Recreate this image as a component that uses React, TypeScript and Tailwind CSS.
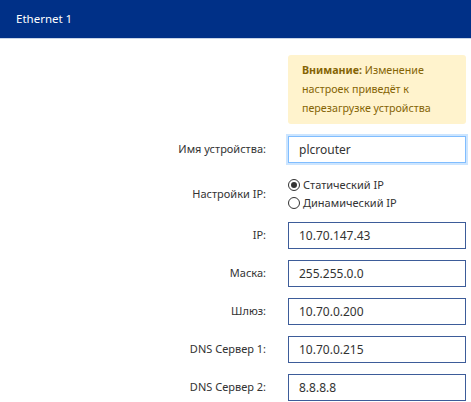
import { useState } from 'react';

const fields = [
  { label: 'IP:', value: '10.70.147.43' },
  { label: 'Маска:', value: '255.255.0.0' },
  { label: 'Шлюз:', value: '10.70.0.200' },
  { label: 'DNS Сервер 1:', value: '10.70.0.215' },
  { label: 'DNS Сервер 2:', value: '8.8.8.8' },
];

function Radio({ checked, label, onClick }: { checked: boolean; label: string; onClick: () => void }) {
  return (
    <button type="button" onClick={onClick} className="flex items-center gap-[3px] h-[18px] text-[11px] text-[#333]">
      <span className="w-[12px] h-[12px] rounded-full border border-[#333] flex items-center justify-center">
        {checked && <span className="w-[6px] h-[6px] rounded-full bg-[#333]" />}
      </span>
      {label}
    </button>
  );
}

export default function App() {
  const [mode, setMode] = useState<'static' | 'dhcp'>('static');
  const [name, setName] = useState('plcrouter');
  const [values, setValues] = useState(fields.map(f => f.value));

  return (
    <div className="w-[471px] h-[402px] bg-white overflow-hidden" style={{ fontFamily: '"Noto Sans", "Open Sans", sans-serif' }}>
      {/* Header */}
      <div className="h-[39px] bg-[#003087] border-b border-[#c8d4e8] flex items-center px-[16px]">
        <span className="text-white text-[11.5px]">Ethernet 1</span>
      </div>

      <div className="grid grid-cols-[1fr_178px] gap-x-[22px] pr-[5px] pt-[16px]">
        <div />
        <div className="bg-[#fff3cd] rounded-[3px] pl-[14px] pr-[10px] py-[6px] text-[10.7px] leading-[19px] text-[#856404]">
          <span className="font-bold">Внимание:</span> Изменение настроек приведёт к перезагрузке устройства
        </div>

        <div className="flex items-center justify-end mt-[12px] text-[11px] text-[#333]">Имя устройства:</div>
        <input
          value={name}
          onChange={e => setName(e.target.value)}
          className="mt-[12px] h-[27px] px-[10px] text-[12px] text-[#333] border border-[#80bdff] shadow-[0_0_0_2px_rgba(0,123,255,0.2)] outline-none"
        />

        <div className="flex items-center justify-end mt-[13px] text-[11px] text-[#333]">Настройки IP:</div>
        <div className="mt-[13px] flex flex-col">
          <Radio checked={mode === 'static'} label="Статический IP" onClick={() => setMode('static')} />
          <Radio checked={mode === 'dhcp'} label="Динамический IP" onClick={() => setMode('dhcp')} />
        </div>

        {fields.map((f, i) => (
          <div key={f.label} className="contents">
            <div className={`flex items-center justify-end text-[11px] text-[#333] ${i === 0 ? 'mt-[10px]' : 'mt-[11px]'}`}>{f.label}</div>
            <input
              value={values[i]}
              onChange={e => setValues(v => v.map((x, j) => (j === i ? e.target.value : x)))}
              className={`h-[27px] px-[10px] text-[12px] text-[#333] border-[1.5px] border-[#3d5c99] outline-none ${i === 0 ? 'mt-[10px]' : 'mt-[11px]'}`}
            />
          </div>
        ))}
      </div>
    </div>
  );
}
